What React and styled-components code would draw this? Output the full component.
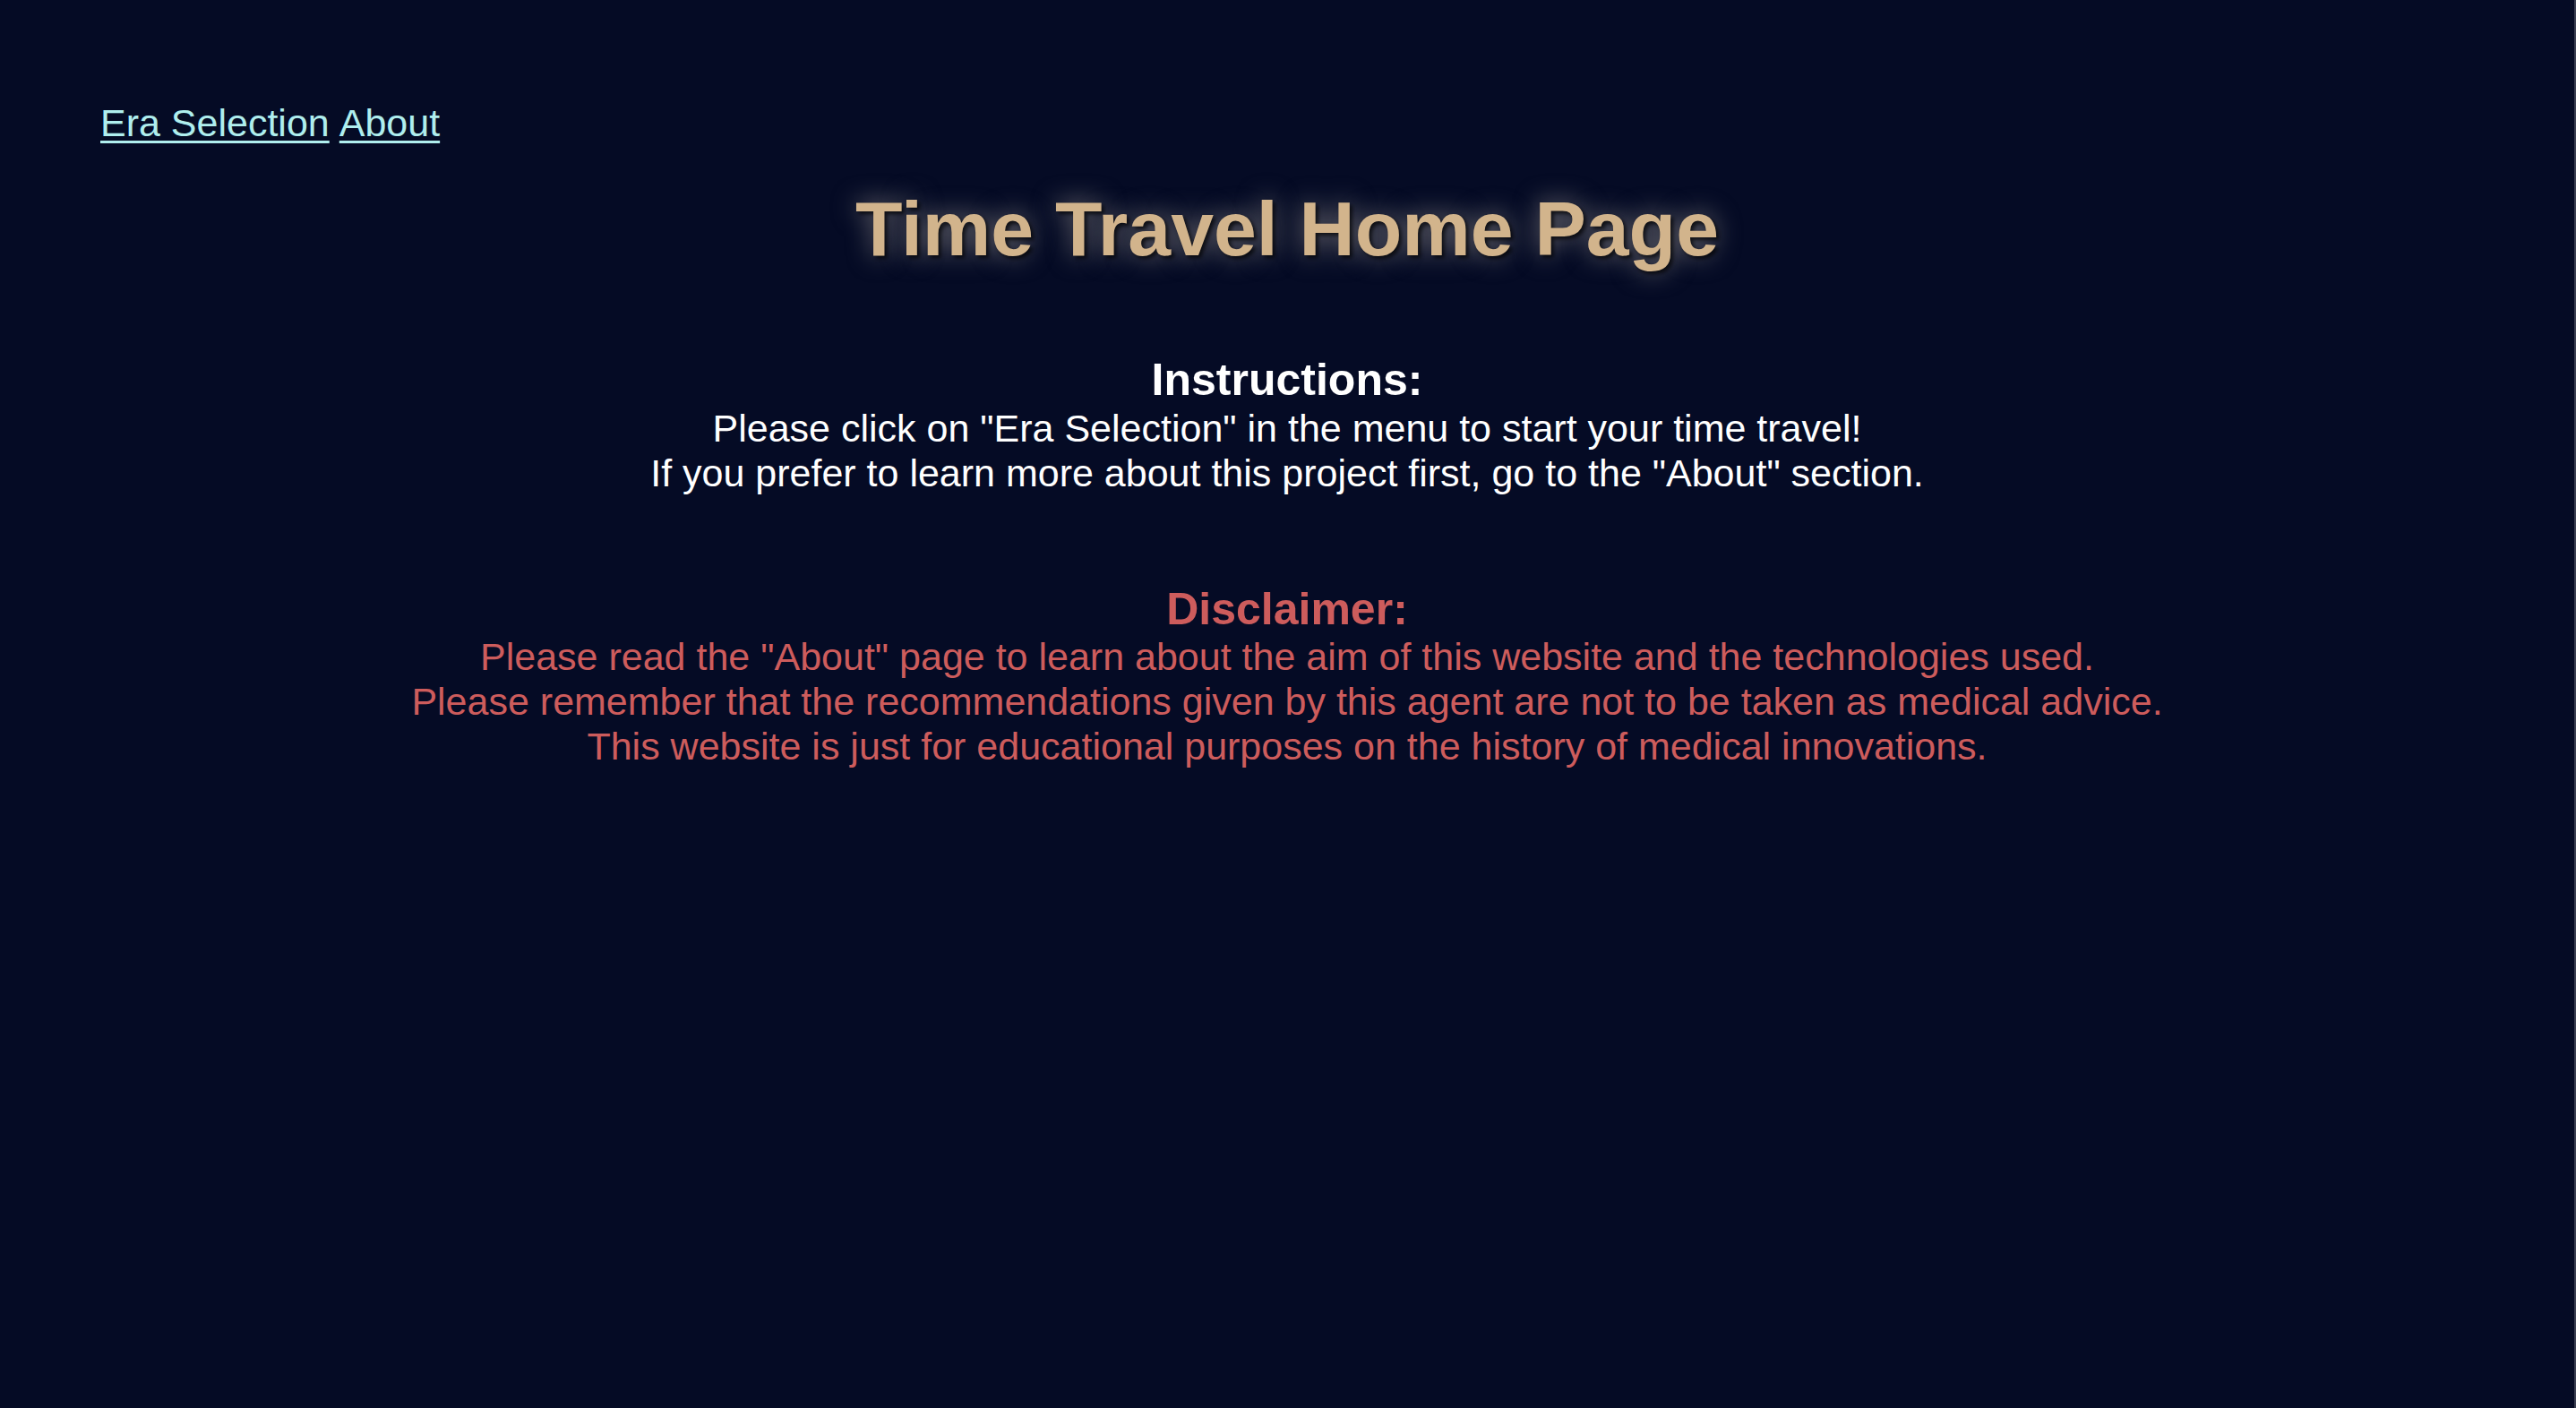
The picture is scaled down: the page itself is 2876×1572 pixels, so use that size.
import styled, { createGlobalStyle } from 'styled-components'

const GlobalStyle = createGlobalStyle`
  html, body {
    margin: 0;
    padding: 0;
    background-color: #050b25;
    overflow: hidden;
  }
  body {
    font-family: 'Liberation Sans', Arial, Helvetica, sans-serif;
  }
`

const Page = styled.div`
  height: 100vh;
  box-sizing: border-box;
  background-color: #050b25;
  border-right: 2px solid #3b3f52;
  padding: 113px 112px 0;
  display: flex;
  flex-direction: column;
`

const Nav = styled.nav`
  display: flex;
  gap: 11px;
  font-size: 43px;
  line-height: 49.4px;
`

const NavLink = styled.a`
  color: #afeeee;
  text-decoration: underline;
  text-decoration-thickness: 3px;
  text-underline-offset: 5px;
  cursor: pointer;
`

const Title = styled.h1`
  margin: 44px 0 0;
  text-align: center;
  font-size: 86px;
  line-height: 99px;
  font-weight: bold;
  color: #d2b48c;
  text-shadow: 3px 3px 4px rgba(0, 0, 0, 0.7), 0 0 28px rgba(230, 220, 200, 0.5);
`

const Section = styled.section`
  margin-top: ${({ $top }) => $top}px;
  text-align: center;
  color: ${({ $color }) => $color};
`

const SectionTitle = styled.h3`
  margin: 0;
  font-size: 50px;
  line-height: 57.5px;
  font-weight: bold;
`

const Line = styled.p`
  margin: 0;
  font-size: 43px;
  line-height: 49.8px;
`

export default function App() {
  return (
    <>
      <GlobalStyle />
      <Page>
        <Nav>
          <NavLink>Era Selection</NavLink>
          <NavLink>About</NavLink>
        </Nav>
        <Title>Time Travel Home Page</Title>
        <Section $top={91} $color="#ffffff">
          <SectionTitle>Instructions:</SectionTitle>
          <Line>Please click on "Era Selection" in the menu to start your time travel!</Line>
          <Line>If you prefer to learn more about this project first, go to the "About" section.</Line>
        </Section>
        <Section $top={98} $color="#cd5c5c">
          <SectionTitle>Disclaimer:</SectionTitle>
          <Line>Please read the "About" page to learn about the aim of this website and the technologies used.</Line>
          <Line>Please remember that the recommendations given by this agent are not to be taken as medical advice.</Line>
          <Line>This website is just for educational purposes on the history of medical innovations.</Line>
        </Section>
      </Page>
    </>
  )
}
